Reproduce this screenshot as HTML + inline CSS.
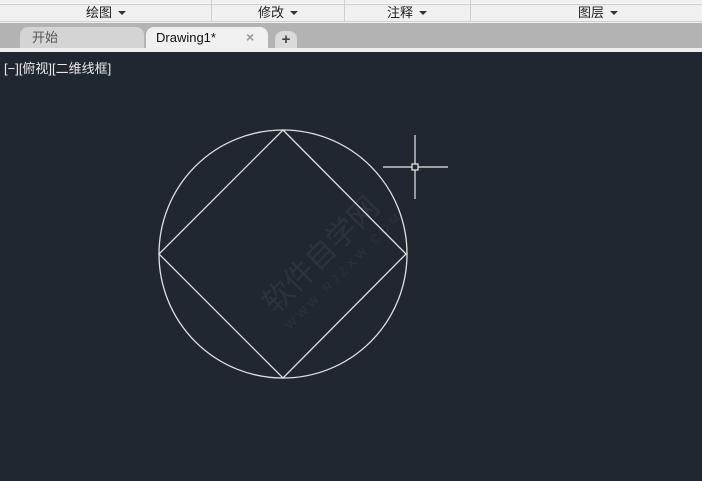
<!DOCTYPE html>
<html><head><meta charset="utf-8"><style>
body{margin:0;width:702px;height:481px;overflow:hidden;background:#212730;font-family:"Liberation Sans","Noto Sans CJK SC",sans-serif;position:relative}
.top{position:absolute;left:0;top:0;width:702px;height:23px;background:#f0f0f0}
.l{position:absolute;left:0;width:702px;height:1px;background:#cfcfcf}
.sec{position:absolute;top:5px;height:16px;font-size:13px;color:#222;line-height:16px;text-align:center}
.sec i{display:inline-block;width:0;height:0;border-left:4px solid transparent;border-right:4px solid transparent;border-top:4px solid #333;margin-left:6px;vertical-align:2px}
.div{position:absolute;top:0;width:1px;height:22px;background:#cfcfcf}
.tabs{position:absolute;left:0;top:23px;width:702px;height:26px;background:#b3b3b3}
.strip{position:absolute;left:0;top:48px;width:702px;height:4px;background:#eeeeee}
.tab{position:absolute;font-size:13px;line-height:21px;border-radius:8px 8px 0 0}
</style></head><body>
<div class="top"></div>
<div class="l" style="top:3px;background:#f8f8f8"></div>
<div class="l" style="top:4px"></div>
<div class="l" style="top:21px"></div>
<div class="div" style="left:211px"></div><div class="div" style="left:344px"></div><div class="div" style="left:470px"></div>
<div class="sec" style="left:66px;width:80px">绘图<i></i></div>
<div class="sec" style="left:238px;width:80px">修改<i></i></div>
<div class="sec" style="left:367px;width:80px">注释<i></i></div>
<div class="sec" style="left:558px;width:80px">图层<i></i></div>
<div class="tabs"></div>
<div class="tab" style="left:20px;top:27px;width:124px;height:22px;background:#d4d4d4;color:#555;padding-left:12px;box-sizing:border-box">开始</div>
<div class="tab" style="left:146px;top:27px;width:122px;height:22px;background:#f0f0f0;color:#111;padding-left:10px;box-sizing:border-box">Drawing1*<span style="position:absolute;left:100px;color:#999;font-size:14px;font-weight:bold">×</span></div>
<div class="tab" style="left:275px;top:31px;width:22px;height:18px;background:#dadada;color:#444;text-align:center;line-height:17px;font-weight:bold;font-size:15px">+</div>
<div class="strip"></div>
<div style="position:absolute;left:4px;top:58px;font-size:13px;color:#e8e8e8">[−][俯视][二维线框]</div>
<svg width="702" height="481" style="position:absolute;left:0;top:0">
<text x="275" y="315" transform="rotate(-45 275 315)" font-size="30" fill="#2d333c" font-family="Noto Sans CJK SC">软件自学网</text>
<text x="290" y="330" transform="rotate(-45 290 330)" font-size="12" fill="#2d333c" letter-spacing="4">WWW.RJZXW.COM</text>
<circle cx="283" cy="254" r="124" fill="none" stroke="#e0e0e0" stroke-width="1.3"/>
<polygon points="283,130 406,254 283,378 159,254" fill="none" stroke="#e0e0e0" stroke-width="1.3"/>
<g stroke="#e8e8e8" stroke-width="1.2"><line x1="383" y1="167" x2="448" y2="167"/><line x1="415" y1="135" x2="415" y2="199"/></g>
<rect x="412" y="164" width="6" height="6" fill="#212730" stroke="#eee" stroke-width="1.2"/>
</svg>
</body></html>
